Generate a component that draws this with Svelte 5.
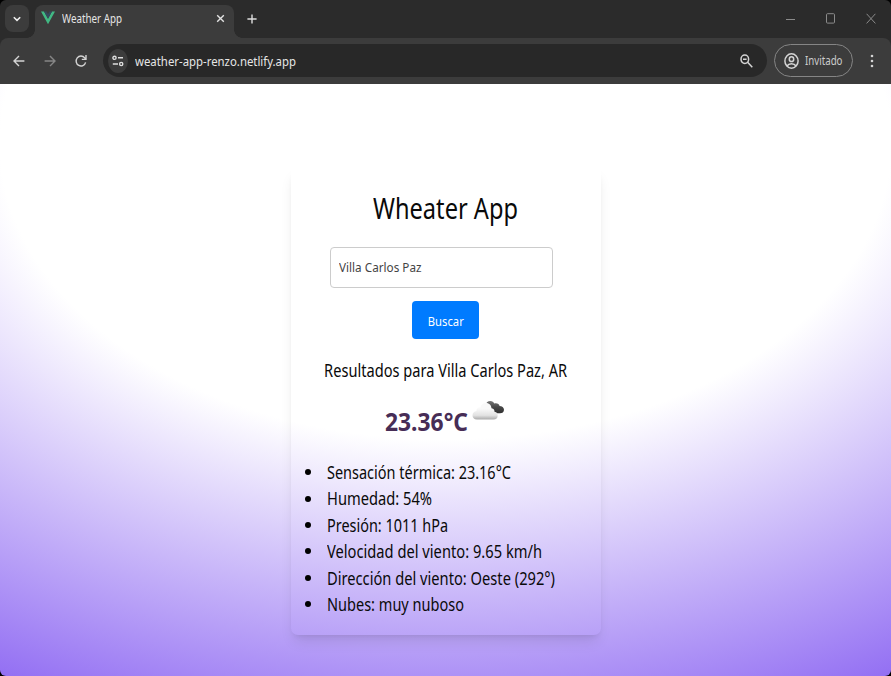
<script>
  const city = 'Villa Carlos Paz';
  const details = [
    { text: 'Sensación térmica: 23.16°C', width: 184 },
    { text: 'Humedad: 54%', width: 105 },
    { text: 'Presión: 1011 hPa', width: 121 },
    { text: 'Velocidad del viento: 9.65 km/h', width: 215 },
    { text: 'Dirección del viento: Oeste (292°)', width: 228 },
    { text: 'Nubes: muy nuboso', width: 137 }
  ];

  // Condenses a label horizontally to the given advance width.
  function fit(node, width) {
    const natural = node.getBoundingClientRect().width;
    node.style.transform = `scaleX(${width / natural})`;
  }
</script>

<div class="window">
  <header class="chrome">
    <div class="tabs">
      <button class="chevron" aria-label="Buscar pestañas">
        <svg width="10" height="8" viewBox="0 0 10 8"><path d="M1.8 2.2 5 5.4 8.2 2.2" fill="none" stroke="#eee" stroke-width="1.6" /></svg>
      </button>
      <div class="tab">
        <svg class="logo" width="14" height="14" viewBox="0 0 14 14">
          <path d="M0 0.5h3L7 7.8l4-7.3h3L7 13.3z" fill="#41b883" />
          <path d="M3 0.5h2.5L7 3.2 8.5 0.5H11L7 7.8z" fill="#35495e" />
        </svg>
        <span class="t tab-title" use:fit={60}>Weather App</span>
        <svg class="close" width="9" height="9" viewBox="0 0 9 9"><path d="M1.2 1.2l6.6 6.6M7.8 1.2 1.2 7.8" stroke="#e3e3e3" stroke-width="1.4" /></svg>
      </div>
      <svg class="plus" width="10" height="10" viewBox="0 0 10 10"><path d="M5 .4v9.2M.4 5h9.2" stroke="#dedede" stroke-width="1.4" /></svg>
      <div class="controls">
        <svg width="9" height="10" viewBox="0 0 9 10"><path d="M0 5.5h9" stroke="#8b8b8b" /></svg>
        <svg width="9" height="11" viewBox="0 0 9 11"><rect x=".5" y=".7" width="8" height="9.4" rx="1" fill="none" stroke="#8b8b8b" /></svg>
        <svg width="10" height="11" viewBox="0 0 10 11"><path d="M.6.8l8.8 9.6M9.4.8.6 10.4" stroke="#8b8b8b" /></svg>
      </div>
    </div>
    <div class="toolbar">
      <svg class="back" width="12" height="12" viewBox="0 0 12 12"><path d="M11.4 6H1.2M6 .9 1 6l5 5.1" fill="none" stroke="#d4d4d4" stroke-width="1.4" /></svg>
      <svg class="forward" width="12" height="12" viewBox="0 0 12 12"><path d="M.6 6h10.2M6 .9 11 6l-5 5.1" fill="none" stroke="#858585" stroke-width="1.4" /></svg>
      <svg class="reload" width="12" height="14" viewBox="0 0 12 14"><path d="M10.6 8.3A4.8 5 0 1 1 9.7 3.9L11 5.3M11 .9v4.5H6.8" fill="none" stroke="#d4d4d4" stroke-width="1.4" /></svg>
      <div class="omnibox">
        <span class="site">
          <svg width="12" height="12" viewBox="0 0 12 12" fill="none" stroke="#dedede" stroke-width="1.4"><circle cx="2.5" cy="2.8" r="1.6" /><path d="M6 2.8h5M.8 9H6" /><circle cx="9.2" cy="9" r="1.6" /></svg>
        </span>
        <span class="t url" use:fit={161}>weather-app-renzo.netlify.app</span>
        <svg class="lens" width="13" height="14" viewBox="0 0 13 14" fill="none" stroke="#d4d4d4" stroke-width="1.5"><ellipse cx="4.8" cy="5.2" rx="3.8" ry="4.2" /><path d="M7.6 8.2l4.7 5M3 5.2h3.6" /></svg>
      </div>
      <div class="profile">
        <svg width="15" height="16" viewBox="0 0 15 16" fill="none" stroke="#d4d4d4" stroke-width="1.5"><ellipse cx="7.5" cy="8" rx="6.6" ry="7.2" /><ellipse cx="7.5" cy="6.2" rx="2.2" ry="2.4" /><path d="M3 13c1-1.7 2.6-2.3 4.5-2.3S11 11.300 12 13" /></svg>
        <span class="t guest" use:fit={37.500}>Invitado</span>
      </div>
      <svg class="more" width="4" height="14" viewBox="0 0 4 14" fill="#d4d4d4"><circle cx="2" cy="2" r="1.3" /><circle cx="2" cy="7" r="1.3" /><circle cx="2" cy="12" r="1.3" /></svg>
    </div>
  </header>

  <main>
    <section class="card">
      <h1><span class="t" use:fit={145}>Wheater App</span></h1>
      <div class="field"><span class="t" use:fit={82.500}>{city}</span></div>
      <button class="search"><span class="t" use:fit={36}>Buscar</span></button>
      <p class="result"><span class="t" use:fit={243}>Resultados para {city}, AR</span></p>
      <div class="weather">
        <strong class="t" use:fit={83}>23.36°C</strong>
        <svg class="cloud" width="33" height="20" viewBox="0 0 33 20">
          <defs>
            <linearGradient id="light" x1="0" y1="0" x2="0" y2="1"><stop offset=".35" stop-color="#f9f9f9" /><stop offset=".75" stop-color="#e2e2e2" /><stop offset="1" stop-color="#aaa" /></linearGradient>
            <linearGradient id="dark" x1="0" y1="0" x2="0" y2="1"><stop offset="0" stop-color="#777" /><stop offset=".5" stop-color="#484848" /><stop offset="1" stop-color="#303030" /></linearGradient>
          </defs>
          <path d="M14 5C14 2.500 16 1 18.200 1C20.500 1 21.500 2 22.300 3.400C25 2.600 27.300 4 27.600 6C30 6 32 7.500 32 9.800C32 12.200 30.300 13.300 28 13.300H20Z" fill="url(#dark)" />
          <path d="M5 19.500C2 19.500.5 17.800.5 15.500S2 11.300 4.500 11C4.300 8.500 6 7.200 8.300 7.700C9.200 4.500 11 3 14 3C17.500 3 19.300 5.500 19.500 8.200C22 8.500 22.500 10 22.500 11.700C25 12 25.700 13.800 25.700 15.500C25.700 18 24.200 19.500 21.500 19.500Z" fill="url(#light)" />
        </svg>
      </div>
      <ul>
        {#each details as item}
          <li><span class="t" use:fit={item.width}>{item.text}</span></li>
        {/each}
      </ul>
    </section>
  </main>
</div>

<style>
  :global(body) { background: #000; overflow: hidden; }
  .window {
    width: 891px; height: 676px; display: flex; flex-direction: column;
    border-radius: 6px; overflow: hidden; box-sizing: border-box;
    font-family: "Noto Sans", "Open Sans", sans-serif;
  }
  svg { display: block; flex: none; }
  button { border: 0; padding: 0; font-family: inherit; }
  .t { display: inline-block; white-space: nowrap; transform-origin: left; flex: none; }

  .chrome { height: 84px; flex: none; background: #2b2b2b; color: #e6e6e6; }
  .tabs { height: 38px; display: flex; align-items: flex-start; }
  .chevron {
    width: 24px; height: 27px; margin: 5px 0 0 5px; border-radius: 8px; background: #3c3c3c;
    display: flex; align-items: center; justify-content: center;
  }
  .tab {
    position: relative; width: 199px; height: 33px; margin: 5px 0 0 6px; box-sizing: border-box;
    border-radius: 8px 8px 0 0; background: #3c3c3c; display: flex; align-items: center;
    padding: 0 9px 5px 6px;
  }
  .tab::before, .tab::after { content: ""; position: absolute; bottom: 0; width: 8px; height: 8px; }
  .tab::before { left: -8px; background: radial-gradient(circle at 0 0, transparent 7.5px, #3c3c3c 8px); }
  .tab::after { right: -8px; background: radial-gradient(circle at 100% 0, transparent 7.5px, #3c3c3c 8px); }
  .logo { margin-right: 7px; position: relative; top: -1px; }
  .tab-title { font-size: 12px; line-height: 16px; }
  .close { margin-left: auto; position: relative; top: -1px; }
  .plus { margin: 14px 0 0 13px; }
  .controls { margin: 13px 15px 0 auto; display: flex; align-items: center; gap: 31px; }

  .toolbar {
    height: 46px; box-sizing: border-box; background: #3c3c3c; border-radius: 8px 8px 0 0;
    display: flex; align-items: center; padding: 0 17px 1px 13px;
  }
  .forward { margin-left: 19px; }
  .reload { margin-left: 19px; }
  .omnibox {
    width: 664px; height: 33px; margin-left: 16px; border-radius: 17px; background: #282828;
    display: flex; align-items: center; box-sizing: border-box; padding: 0 14px 0 5px;
  }
  .site {
    width: 20px; height: 24px; border-radius: 50%; background: #3c3c3c; flex: none;
    display: flex; align-items: center; justify-content: center; margin-right: 7px;
  }
  .url { font-size: 13px; line-height: 18px; }
  .lens { margin-left: auto; }
  .profile {
    width: 79px; height: 33px; margin-left: 7px; border: 1px solid #858585; border-radius: 17px;
    box-sizing: border-box; display: flex; align-items: center; padding-left: 9px; gap: 6px; flex: none;
  }
  .guest { font-size: 12px; line-height: 16px; color: #ccc; }
  .more { margin-left: auto; }

  main {
    flex: 1; display: flex; justify-content: center; align-items: flex-start; padding-top: 83px;
    background: radial-gradient(125% 125% at 50% 10%, #fff 40%, #63e 100%);
  }
  .card {
    width: 310px; height: 468px; box-sizing: border-box; border-radius: 7px; padding-top: 23px;
    display: flex; flex-direction: column; align-items: center; color: #0a0a0a;
    box-shadow: 0 9px 14px -3px rgb(0 0 0 / .1), 0 4px 6px -4px rgb(0 0 0 / .1);
  }
  h1 { margin: 0; font-size: 28.5px; line-height: 36px; font-weight: 400; }
  h1 .t, .search .t, .result .t { transform-origin: center; }
  .field {
    width: 223px; height: 41px; box-sizing: border-box; border: 1px solid #ccc; border-radius: 4px;
    background: #fff; margin: 21px 8px 0 0; padding: 0 0 2px 8px; display: flex; align-items: center;
    font-size: 13px; color: #444;
  }
  .search {
    width: 67px; height: 38px; margin-top: 13px; border-radius: 4px; background: #007bff;
    color: #fff; font-size: 13px; padding-top: 1px; display: flex; align-items: center; justify-content: center;
  }
  .result { margin: 18px 0 0; font-size: 17.500px; line-height: 26px; }
  .weather { width: 122px; height: 40px; margin-top: 16px; display: flex; position: relative; }
  .weather strong { font-size: 25px; line-height: 45px; color: #472d56; }
  .cloud { position: absolute; left: 87px; top: 1px; }
  ul {
    list-style: none; align-self: stretch; margin: 20px 0 0; padding: 0 0 0 14px;
    font-size: 17.500px; line-height: 26.4px;
  }
  li { display: flex; align-items: center; height: 26.4px; }
  li::before { content: ""; width: 6px; height: 6px; border-radius: 50%; background: #000; margin-right: 16px; flex: none; }
</style>
